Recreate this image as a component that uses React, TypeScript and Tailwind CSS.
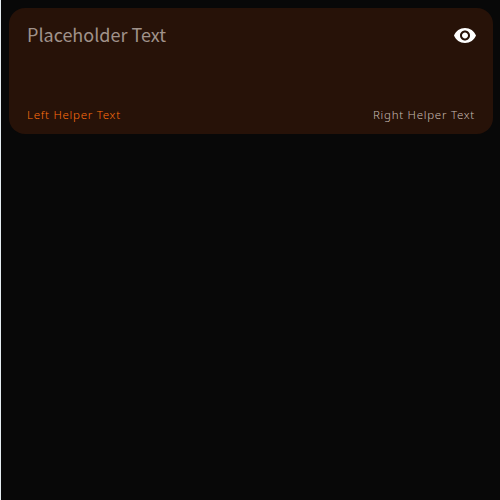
export default function App() {
  return (
    <main className="h-[500px] w-[500px] border-l border-[#e4ecf0] bg-[#080808] pt-2 pr-[7px] pl-2 font-['Noto_Sans_CJK_SC',sans-serif]">
      <section className="flex h-[126px] flex-col justify-between rounded-[16px] bg-[#271208] px-[18px] pt-[14px] pb-[11px]">
        <div className="flex items-start justify-between">
          <span className="text-[18px] leading-6 text-[#a0928b]">Placeholder Text</span>
          <svg className="mt-px mr-[-2px] size-6" viewBox="0 0 24 24" fill="white">
            <path d="M12 4.9C7 4.9 2.73 8.01 1 12.4c1.73 4.39 6 7.5 11 7.5s9.27-3.11 11-7.5c-1.73-4.39-6-7.5-11-7.5zM12 17.4c-2.76 0-5-2.24-5-5s2.24-5 5-5 5 2.24 5 5-2.24 5-5 5zm0-8c-1.66 0-3 1.34-3 3s1.34 3 3 3 3-1.34 3-3-1.34-3-3-3z" />
          </svg>
        </div>
        <div className="flex justify-between font-['Noto_Sans',sans-serif] text-[11.5px] leading-4 font-[350] tracking-[0.74px]">
          <span className="text-[#ff700f]">Left Helper Text</span>
          <span className="text-[#c8bab2]">Right Helper Text</span>
        </div>
      </section>
    </main>
  );
}
